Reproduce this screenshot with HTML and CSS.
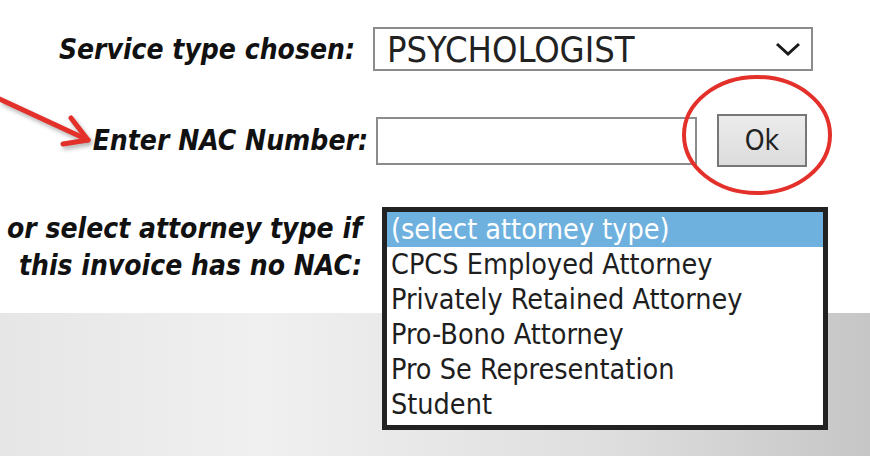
FILE: index.html
```html
<!DOCTYPE html>
<html lang="en">
<head>
    <meta charset="UTF-8">
    <title>Invoice service type</title>
    <link rel="stylesheet" href="styles.css">
</head>
<body>
    <div class="form">
        <div class="row row-service">
            <label class="label">Service type chosen:</label>
            <div class="select">
                <span>PSYCHOLOGIST</span>
                <svg class="chevron" width="26" height="16" viewBox="0 0 26 16">
                    <polyline points="2,3 13,13 24,3" fill="none" stroke="#1a1a1a" stroke-width="3"/>
                </svg>
            </div>
        </div>
        <div class="row row-nac">
            <label class="label">Enter NAC Number:</label>
            <input type="text" class="nac">
            <button class="ok">Ok</button>
        </div>
        <div class="row row-attorney">
            <label class="label">or select attorney type if<br>this invoice has no NAC:</label>
            <ul class="listbox">
                <li class="selected">(select attorney type)</li>
                <li>CPCS Employed Attorney</li>
                <li>Privately Retained Attorney</li>
                <li>Pro-Bono Attorney</li>
                <li>Pro Se Representation</li>
                <li>Student</li>
            </ul>
        </div>
    </div>

    <!-- red annotations drawn over the form -->
    <svg class="arrow" width="110" height="160" viewBox="0 0 110 160">
        <g fill="none" stroke="#e3302a" stroke-width="5" stroke-linecap="round" stroke-linejoin="round">
            <line x1="-5" y1="97" x2="88" y2="140"/>
            <polyline points="71,118 88,140 63,144"/>
        </g>
    </svg>
    <svg class="circle" width="160" height="130" viewBox="0 0 160 130">
        <ellipse cx="77" cy="62" rx="73" ry="58" fill="none" stroke="#e3302a" stroke-width="4"/>
    </svg>
</body>
</html>
```

FILE: styles.css
```css
body {
    margin: 0;
    height: 456px;
    overflow: hidden;
    font-family: "DejaVu Sans Condensed", "DejaVu Sans", sans-serif;
    color: #1e1e1e;
    background:
        linear-gradient(#ffffff, #ffffff) top / 100% 313px no-repeat,
        linear-gradient(90deg, #e6e6e6 0%, #f0f0f0 30%, #dedede 70%, #c6c6c6 100%);
}
.form {
    padding-top: 27px;
}
.row {
    display: flex;
    align-items: center;
}
.label {
    box-sizing: border-box;
    width: 373px;
    text-align: right;
    font-weight: bold;
    font-style: italic;
    font-size: 28px;
    line-height: 37px;
    color: #111;
    white-space: nowrap;
}
.row-service .label {
    padding-right: 18px;
}
.select {
    box-sizing: border-box;
    width: 440px;
    height: 44px;
    border: 2px solid #8c8c8c;
    display: flex;
    align-items: center;
    justify-content: space-between;
    padding: 0 10px 0 12px;
    font-size: 36px;
    color: #222;
}
.row-nac {
    margin-top: 43px;
}
.row-nac .label {
    padding-right: 5px;
}
.nac {
    box-sizing: border-box;
    width: 321px;
    height: 48px;
    margin: 0 0 0 3px;
    border: 2px solid #8c8c8c;
    background: #fff;
}
.ok {
    box-sizing: border-box;
    width: 90px;
    height: 53px;
    margin-left: 20px;
    border: 2px solid #777;
    background: linear-gradient(#ececec, #dcdcdc);
    font-family: inherit;
    font-size: 28px;
    color: #222;
    padding: 0;
}
.row-attorney {
    margin-top: 40px;
    align-items: flex-start;
}
.row-attorney .label {
    padding-right: 11px;
    padding-top: 3px;
}
.listbox {
    box-sizing: border-box;
    width: 446px;
    height: 223px;
    margin: 0 0 0 9px;
    padding: 0;
    list-style: none;
    background: #fff;
    border: 5px solid #222;
    font-size: 28.5px;
    color: #1e1e1e;
}
.listbox li {
    height: 35px;
    line-height: 35px;
    padding-left: 4px;
    white-space: nowrap;
}
.listbox .selected {
    background: #6eb1de;
    color: #fff;
}
.arrow {
    position: absolute;
    left: 0;
    top: 0;
    filter: drop-shadow(2px 3px 2px rgba(0, 0, 0, 0.3));
}
.circle {
    position: absolute;
    top: 73px;
    left: 680px;
}
```
